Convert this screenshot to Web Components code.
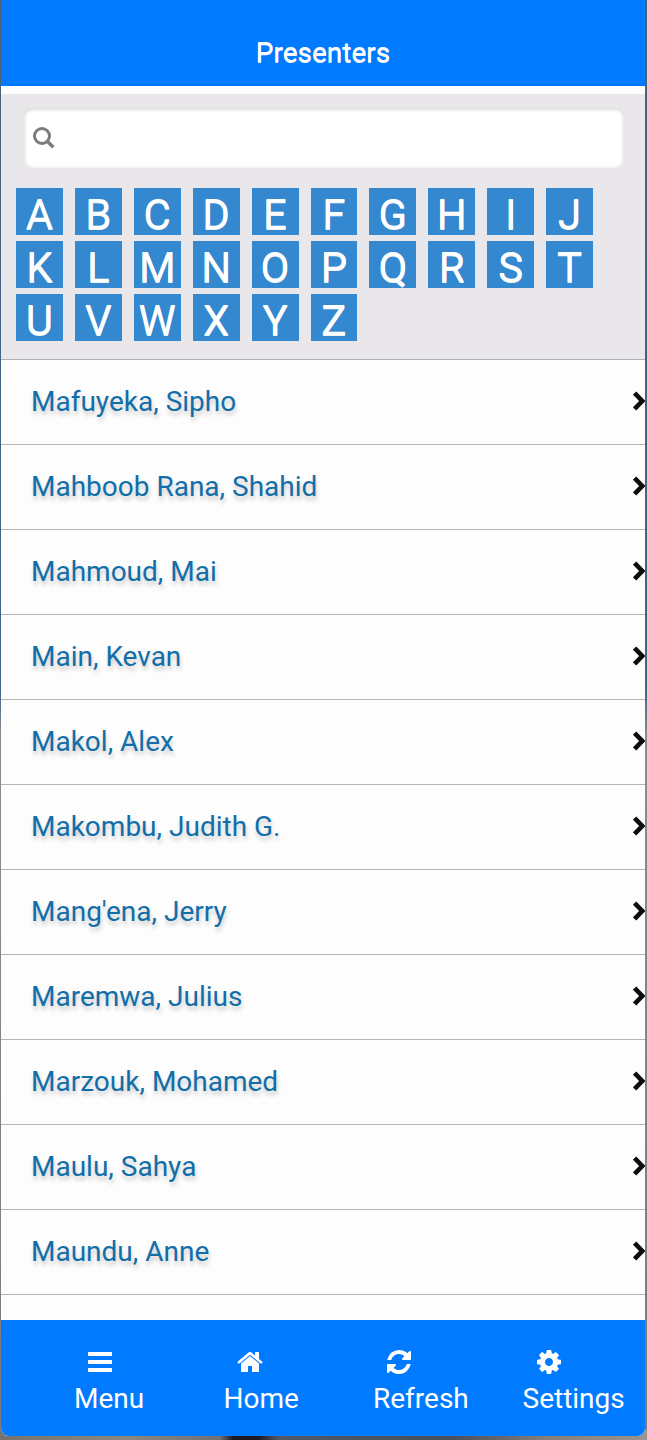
<!DOCTYPE html>
<html lang="en">
<head>
<meta charset="utf-8">
<meta name="viewport" content="width=device-width, initial-scale=1">
<title>Presenters</title>
<style>
    body {
        margin: 0;
        font-family: Roboto, "Liberation Sans", sans-serif;
        font-size: 28px;
    }
</style>
</head>
<body>
<app-shell>
    <page-header slot="header">Presenters</page-header>
    <filter-panel></filter-panel>
    <presenter-list>
        <presenter-item>Mafuyeka, Sipho</presenter-item>
        <presenter-item>Mahboob Rana, Shahid</presenter-item>
        <presenter-item>Mahmoud, Mai</presenter-item>
        <presenter-item>Main, Kevan</presenter-item>
        <presenter-item>Makol, Alex</presenter-item>
        <presenter-item>Makombu, Judith G.</presenter-item>
        <presenter-item>Mang'ena, Jerry</presenter-item>
        <presenter-item>Maremwa, Julius</presenter-item>
        <presenter-item>Marzouk, Mohamed</presenter-item>
        <presenter-item>Maulu, Sahya</presenter-item>
        <presenter-item>Maundu, Anne</presenter-item>
    </presenter-list>
    <tab-bar slot="footer">
        <tab-button icon="bars">Menu</tab-button>
        <tab-button icon="home">Home</tab-button>
        <tab-button icon="refresh">Refresh</tab-button>
        <tab-button icon="cog">Settings</tab-button>
    </tab-bar>
</app-shell>

<script>
const ICONS = {
    bars: '<rect x="128" y="256" width="1536" height="256" rx="30"/><rect x="128" y="768" width="1536" height="256" rx="30"/><rect x="128" y="1280" width="1536" height="256" rx="30"/>',
    home: '<path d="M1472 992v480q0 26-19 45t-45 19h-384v-384h-256v384h-384q-26 0-45-19t-19-45v-480q0-1 .5-3t.5-3l575-474 575 474q1 2 1 6zm223-69l-62 74q-8 9-21 11h-3q-13 0-21-7l-692-577-692 577q-12 8-24 7-13-2-21-11l-62-74q-8-10-7-23.5t11-21.5l719-599q32-26 76-26t76 26l244 204v-195q0-14 9-23t23-9h192q14 0 23 9t9 23v408l219 182q10 8 11 21.5t-7 23.5z"/>',
    refresh: '<path d="M1639 1056q0 5-1 7-64 268-268 434.5t-478 166.5q-146 0-282.5-55t-243.5-157l-129 129q-19 19-45 19t-45-19-19-45v-448q0-26 19-45t45-19h448q26 0 45 19t19 45-19 45l-137 137q71 66 161 102t187 36q134 0 250-65t186-179q11-17 53-117 8-23 30-23h192q13 0 22.5 9.5t9.5 22.5zm25-800v448q0 26-19 45t-45 19h-448q-26 0-45-19t-19-45 19-45l138-138q-148-137-349-137-134 0-250 65t-186 179q-11 17-53 117-8 23-30 23h-199q-13 0-22.5-9.5t-9.5-22.5v-7q65-268 270-434.5t480-166.5q146 0 284 55.5t245 156.5l130-129q19-19 45-19t45 19 19 45z"/>',
    cog: '<path d="M1152 896q0-106-75-181t-181-75-181 75-75 181 75 181 181 75 181-75 75-181zm512-109v222q0 12-8 23t-20 13l-185 28q-19 54-39 91 35 50 107 138 10 12 10 25t-9 23q-27 37-99 108t-94 71q-12 0-26-9l-138-108q-44 23-91 38-16 136-29 186-7 28-36 28h-222q-14 0-24.5-8.5t-11.5-21.5l-28-184q-49-16-90-37l-141 107q-10 9-25 9-14 0-25-11-126-114-165-168-7-10-7-23 0-12 8-23 15-21 51-66.5t54-70.5q-27-50-41-99l-183-27q-13-2-21-12.5t-8-23.5v-222q0-12 8-23t19-13l186-28q14-46 39-92-40-57-107-138-10-12-10-24 0-10 9-23 26-36 98.5-107.5t94.5-71.5q13 0 26 10l138 107q44-23 91-38 16-136 29-186 7-28 36-28h222q14 0 24.5 8.5t11.5 21.5l28 184q49 16 90 37l142-107q9-9 24-9 13 0 25 10 129 119 165 170 7 8 7 22 0 12-8 23-15 21-51 66.5t-54 70.5q26 50 41 98l183 28q13 2 21 12.5t8 23.5z"/>'
};

class AppShell extends HTMLElement {
    constructor() {
        super();
        this.attachShadow({ mode: 'open' }).innerHTML = `
        <style>
        :host {
            box-sizing: border-box;
            display: flex;
            height: 100vh;
            padding: 0 2px 4px 1px;
            background:
                linear-gradient(90deg, #76736f, #8a8784 20%, #6e7176 34%, #1d1a22 36%, #1d1a22 40%, #50596a 43%, #47505e 70%, #85807e 85%, #9a9490) bottom / 100% 10px no-repeat,
                linear-gradient(#4a6178 0, #3f668c 48%, #8b8b8b 51%, #7c7b7a 100%);
        }
        .frame {
            flex: 1;
            min-width: 0;
            display: flex;
            flex-direction: column;
            overflow: hidden;
            background: #fdfdfd;
            border-radius: 0 0 8px 8px;
        }
        main {
            flex: 1;
            min-height: 0;
            overflow: hidden;
            padding-top: 8px;
        }
        </style>
        <div class="frame">
            <slot name="header"></slot>
            <main><slot></slot></main>
            <slot name="footer"></slot>
        </div>
        `;
    }
}

class PageHeader extends HTMLElement {
    constructor() {
        super();
        this.attachShadow({ mode: 'open' }).innerHTML = `
        <style>
        :host {
            display: block;
            flex: none;
            padding: 37px 0 17px;
            background: #007aff;
            color: #fff;
            text-align: center;
        }
        h1 {
            margin: 0;
            font-size: 28px;
            line-height: 32px;
            font-weight: 400;
            text-shadow: 0 1px 0 #f3f3f3;
        }
        </style>
        <h1><slot></slot></h1>
        `;
    }
}

class FilterPanel extends HTMLElement {
    constructor() {
        super();
        const letters = [...'ABCDEFGHIJKLMNOPQRSTUVWXYZ'];
        this.attachShadow({ mode: 'open' }).innerHTML = `
        <style>
        :host {
            display: block;
            padding: 14px 0 18px;
            background: #e9e7ea;
            border-bottom: 1px solid #b0b0b2;
        }
        .search {
            display: flex;
            align-items: center;
            gap: 8px;
            height: 60px;
            box-sizing: border-box;
            margin: 0 21px 0 23px;
            padding: 0 8px;
            background: #fff;
            border-radius: 8px;
            box-shadow: inset 0 1px 4px rgba(0, 0, 0, 0.2);
        }
        .search svg {
            flex: none;
            width: 24px;
            height: 24px;
        }
        input {
            flex: 1;
            min-width: 0;
            height: 40px;
            padding: 0;
            border: 0;
            outline: 0;
            background: none;
            font: inherit;
            color: #333;
        }
        nav {
            display: grid;
            grid-template-columns: repeat(10, 1fr);
            gap: 6px 12px;
            margin: 20px 52px 0 15px;
        }
        button {
            height: 47px;
            padding: 6px 0 0;
            border: 0;
            background: #3388d0;
            color: #fff;
            font: inherit;
            font-size: 42px;
            line-height: 41px;
            text-shadow: 0 1px 0 #f3f3f3;
            cursor: pointer;
        }
        </style>
        <label class="search">
            <svg viewBox="0 0 24 24" fill="none" stroke="#7c7c7c" stroke-width="3" aria-hidden="true">
                <circle cx="10" cy="10" r="7.5"/><path d="M15.3 15.3l6 6" stroke-width="3.4"/>
            </svg>
            <input type="search" aria-label="Search presenters">
        </label>
        <nav>${letters.map(l => `<button type="button">${l}</button>`).join('')}</nav>
        `;
    }
}

class PresenterList extends HTMLElement {
    constructor() {
        super();
        this.attachShadow({ mode: 'open' }).innerHTML = `
        <style>
        :host {
            display: block;
        }
        </style>
        <slot></slot>
        `;
    }
}

class PresenterItem extends HTMLElement {
    constructor() {
        super();
        this.attachShadow({ mode: 'open' }).innerHTML = `
        <style>
        :host {
            display: block;
            border-bottom: 1px solid #b4b4b6;
        }
        a {
            box-sizing: border-box;
            display: flex;
            align-items: center;
            justify-content: space-between;
            height: 84px;
            padding: 0 0 2px 30px;
            color: #126ea9;
            text-decoration: none;
            text-shadow: 1px 4px 4px rgba(0, 0, 0, 0.2);
        }
        svg {
            flex: none;
            width: 12px;
            height: 20px;
        }
        </style>
        <a href="#">
            <span><slot></slot></span>
            <svg viewBox="0 0 12 20" fill="none" stroke="#0c0c0c" stroke-width="4.6" aria-hidden="true">
                <path d="M1.6 2L9.2 10L1.6 18"/>
            </svg>
        </a>
        `;
    }
}

class TabBar extends HTMLElement {
    constructor() {
        super();
        this.attachShadow({ mode: 'open' }).innerHTML = `
        <style>
        :host {
            display: grid;
            grid-template-columns: repeat(4, 1fr);
            flex: none;
            padding: 28px 0 18px 46px;
            background: #007aff;
        }
        </style>
        <slot></slot>
        `;
    }
}

class TabButton extends HTMLElement {
    get icon(){
        return this.getAttribute('icon')
    }

    constructor() {
        super();
        this.attachShadow({ mode: 'open' }).innerHTML = `
        <style>
        :host {
            display: block;
            min-width: 0;
        }
        button {
            display: flex;
            flex-direction: column;
            gap: 4px;
            width: 100%;
            padding: 0 0 0 27px;
            border: 0;
            background: none;
            color: #fff;
            font: inherit;
            line-height: 38px;
            text-align: left;
            cursor: pointer;
        }
        svg {
            width: 28px;
            height: 28px;
            margin-left: 12px;
            fill: currentColor;
        }
        </style>
        <button type="button">
            <svg viewBox="0 0 1792 1792" aria-hidden="true">${ICONS[this.icon]}</svg>
            <span><slot></slot></span>
        </button>
        `;
    }
}

customElements.define('app-shell', AppShell);
customElements.define('page-header', PageHeader);
customElements.define('filter-panel', FilterPanel);
customElements.define('presenter-list', PresenterList);
customElements.define('presenter-item', PresenterItem);
customElements.define('tab-bar', TabBar);
customElements.define('tab-button', TabButton);
</script>
</body>
</html>
